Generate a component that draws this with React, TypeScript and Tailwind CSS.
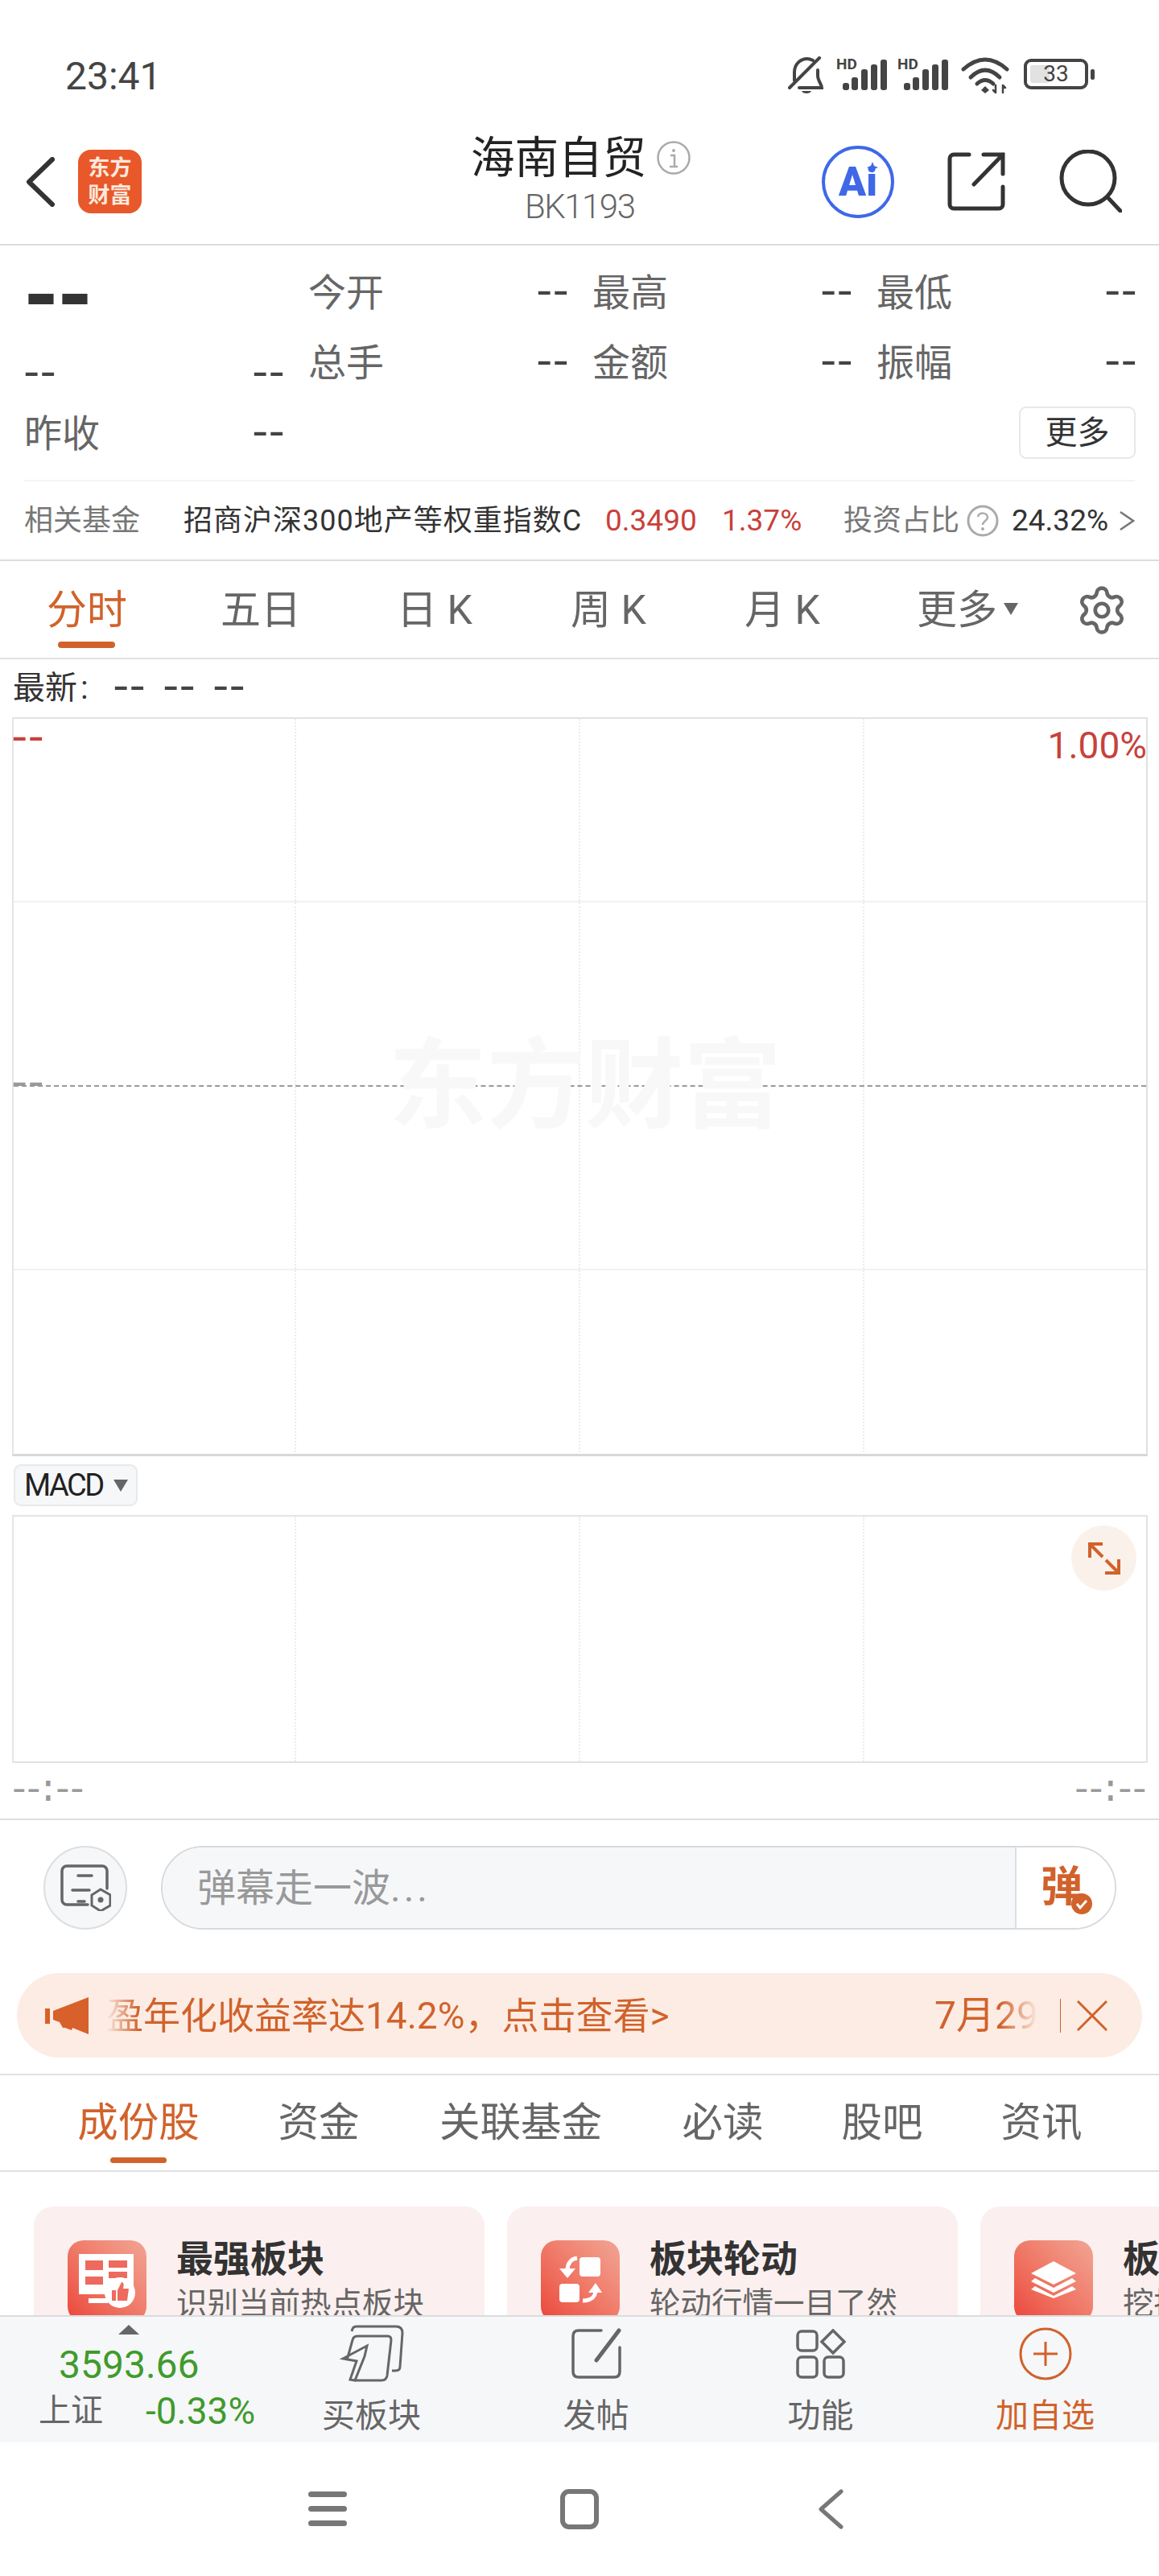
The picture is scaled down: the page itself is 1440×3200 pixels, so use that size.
import { Settings } from "lucide-react";

const MONO = "font-['Liberation_Mono',monospace]";

// wide, tight dashes: the mono hyphen is pulled together with negative tracking
const Dash = ({ className = "text-[#444]" }: { className?: string }) => (
  <span className={`${MONO} inline-block w-[38px] whitespace-nowrap indent-[-7px] text-[54px] leading-none tracking-[-12px] ${className}`}>--</span>
);

const Stat = ({ label }: { label: string }) => (
  <div className="flex h-[87px] items-center justify-between">
    <span className="text-[47px] leading-none text-[#666]">{label}</span>
    <Dash />
  </div>
);

const Signal = () => (
  <div className="relative h-[40px] w-[64px]">
    <span className="absolute left-0 top-0 text-[19px] font-bold leading-[16px] text-[#444]">HD</span>
    <svg viewBox="0 0 64 40" className="h-[40px] w-[64px]" fill="#444">
      <rect x="8" y="31" width="8" height="9" rx="3" />
      <rect x="19" y="24" width="8" height="16" rx="3" />
      <rect x="31" y="14" width="8" height="26" rx="3" />
      <rect x="43" y="8" width="8" height="32" rx="3" />
      <rect x="55" y="2" width="8" height="38" rx="3" />
    </svg>
  </div>
);

const StatusBar = () => (
  <div className="flex h-[150px] items-start justify-between pl-[81px] pr-[80px] pt-[70px] text-[#444]">
    <span className="text-[48px] leading-[50px]">23:41</span>
    <div className="flex items-start">
      <svg viewBox="0 0 46 46" className="h-[46px] w-[46px]" fill="none" stroke="#444" strokeWidth="4" strokeLinecap="round">
        <path d="M2 39 39 2" />
        <path d="M8 30V20C8 9 16 3 24 3c3 0 5 1 7 2" />
        <path d="M37 17v7c0 6 5 11 5 15H14" />
        <path d="M17 43h12c-1 4-11 4-12 0Z" fill="#444" stroke="none" />
      </svg>
      <div className="ml-[14px] mt-[2px] flex gap-[12px]">
        <Signal />
        <Signal />
      </div>
      <svg viewBox="0 0 60 46" className="ml-[15px] mt-[1px] h-[46px] w-[60px]" fill="none" stroke="#444" strokeWidth="5" strokeLinecap="round">
        <path d="M3 15Q30-9 57 15" />
        <path d="M12 25Q30 7 48 25" />
        <path d="M20 33Q30 24 40 33" />
        <path d="M30 36l5 5-5 4-5-4Z" fill="#444" stroke="none" />
        <path d="M43 35v9M40 41l3 3M52 44v-9M52 35l3 3" strokeWidth="2.5" />
      </svg>
      <div className="ml-[18px] mt-[3px] flex items-center">
        <div className="relative flex h-[38px] w-[80px] items-center justify-center rounded-[9px] border-[4px] border-[#444]">
          <div className="absolute bottom-[4px] left-[4px] top-[4px] w-[24px] rounded-[3px] bg-[#e2e2e2]" />
          <span className="relative text-[28px] leading-none text-[#444]">33</span>
        </div>
        <div className="ml-[3px] h-[13px] w-[5px] rounded-[2px] bg-[#444]" />
      </div>
    </div>
  </div>
);

const NavBar = () => (
  <div className="flex h-[155px] items-start border-b-2 border-[#dcdcdc] pl-[32px]">
    <svg viewBox="0 0 36 62" className="mt-[45px] h-[62px] w-[36px]" fill="none" stroke="#333" strokeWidth="6" strokeLinecap="round" strokeLinejoin="round">
      <path d="M33 3 4 31l29 28" />
    </svg>
    <div className="ml-[29px] mt-[36px] flex h-[79px] w-[79px] flex-col items-center justify-center rounded-[16px] bg-[#e8582a] text-[27px] font-bold leading-[34px] text-[#fde8dc]">
      <span>东方</span>
      <span>财富</span>
    </div>
    <div className="ml-[409px] mt-[16px] flex w-[280px] shrink-0 flex-col items-start">
      <div className="flex items-center">
        <span className="whitespace-nowrap text-[54.5px] leading-[60px] text-[#222]">海南自贸</span>
        <svg viewBox="0 0 42 42" className="ml-[13px] h-[42px] w-[42px]" fill="none" stroke="#aaa" strokeWidth="2.5">
          <circle cx="21" cy="21" r="19.5" />
          <circle cx="21" cy="12" r="2" fill="#aaa" stroke="none" />
          <path d="M17 18h5v14M16 32h10" />
        </svg>
      </div>
      <span className="ml-[67px] mt-[6px] text-[42px] font-light leading-[50px] tracking-[-1.5px] text-[#666]">BK1193</span>
    </div>
    <div className="ml-[-10px] flex">
      <div className="relative ml-[166px] mt-[31px] flex h-[90px] w-[90px] items-center justify-center rounded-full border-[4px] border-[#3f68e8]">
        <span className="text-[50px] font-black leading-none text-[#3f68e8]">Ai</span>
        <svg viewBox="0 0 14 14" className="absolute right-[16px] top-[16px] h-[14px] w-[14px]" fill="#3f68e8">
          <path d="M7 0 9 5l5 2-5 2-2 5-2-5-5-2 5-2Z" />
        </svg>
      </div>
      <svg viewBox="0 0 72 73" className="ml-[66px] mt-[39px] h-[73px] w-[72px]" fill="none" stroke="#333" strokeWidth="5" strokeLinecap="round">
        <path d="M27 3H8a5 5 0 0 0-5 5v57a5 5 0 0 0 5 5h56a5 5 0 0 0 5-5V43" />
        <path d="M45 3h24v24M33 40 69 3" />
      </svg>
      <svg viewBox="0 0 78 78" className="ml-[67px] mt-[36px] h-[78px] w-[78px]" fill="none" stroke="#333" strokeWidth="5" strokeLinecap="round">
        <circle cx="36" cy="35" r="33" />
        <path d="M60 59 76 76" />
      </svg>
    </div>
  </div>
);

const Quote = () => (
  <div className="border-b-2 border-[#dcdcdc]">
    <div className="mx-[30px] grid grid-cols-[322px_322px_322px_322px] gap-x-[31px] border-b-2 border-[#f4f4f4] pb-[15px] pt-[15px]">
      <div className="flex h-[87px] items-center overflow-visible">
        <span className={`${MONO} mt-[14px] block w-[84px] whitespace-nowrap indent-[-12px] text-[110px] font-bold leading-[87px] tracking-[-24px] text-[#333]`}>--</span>
      </div>
      <Stat label="今开" />
      <Stat label="最高" />
      <Stat label="最低" />
      <div className="flex h-[87px] items-center justify-between pt-[28px]">
        <Dash />
        <Dash />
      </div>
      <Stat label="总手" />
      <Stat label="金额" />
      <Stat label="振幅" />
      <div className="flex h-[87px] items-center justify-between pt-[2px]">
        <span className="text-[47px] leading-none text-[#666]">昨收</span>
        <Dash />
      </div>
      <div />
      <div />
      <div className="flex h-[87px] items-center justify-end">
        <div className="flex h-[65px] w-[145px] items-center justify-center rounded-[9px] border-2 border-[#e8e8e8] text-[40px] leading-none text-[#333]">更多</div>
      </div>
    </div>
    <div className="flex h-[97px] items-center whitespace-nowrap pl-[30px] text-[36px] leading-none">
      <span className="w-[198px] shrink-0 text-[#777]">相关基金</span>
      <span className="w-[524px] shrink-0 tracking-[1px] text-[#333]">招商沪深300地产等权重指数C</span>
      <span className="w-[145px] shrink-0 text-[37px] text-[#c8413a]">0.3490</span>
      <span className="w-[151px] shrink-0 text-[37px] text-[#c8413a]">1.37%</span>
      <span className="shrink-0 text-[#777]">投资占比</span>
      <svg viewBox="0 0 40 40" className="ml-[9px] h-[40px] w-[40px] shrink-0" fill="none" stroke="#aaa" strokeWidth="3">
        <circle cx="20" cy="20" r="18" />
        <path d="M14 15c1-6 12-6 12 1 0 4-6 4-6 9" strokeWidth="2.5" />
        <circle cx="20" cy="30" r="2" fill="#aaa" stroke="none" />
      </svg>
      <span className="ml-[16px] shrink-0 text-[37px] text-[#333]">24.32%</span>
      <svg viewBox="0 0 20 26" className="ml-[13px] h-[26px] w-[20px] shrink-0" fill="none" stroke="#777" strokeWidth="2.5">
        <path d="M2 2 18 13 2 24" />
      </svg>
    </div>
  </div>
);

const periodTabs = ["分时", "五日", "日 K", "周 K", "月 K"];

const PeriodTabs = () => (
  <div className="flex h-[122px] items-center border-b-2 border-[#e2e2e2] pt-[2px] text-[50px] leading-none text-[#666]">
    {periodTabs.map((t, i) => (
      <div key={t} className="relative flex h-full w-[216px] shrink-0 items-center justify-center">
        <span className={i === 0 ? "text-[#d1622b]" : ""}>{t}</span>
        {i === 0 && <div className="absolute bottom-[12px] left-[72px] h-[8px] w-[71px] rounded-full bg-[#d1622b]" />}
      </div>
    ))}
    <div className="flex w-[200px] shrink-0 items-center pl-[59px]">
      <span>更多</span>
      <svg viewBox="0 0 18 15" className="ml-[8px] mt-[-4px] h-[15px] w-[18px]" fill="#666">
        <path d="M0 0h18L9 15Z" />
      </svg>
    </div>
    <Settings className="ml-[56px] h-[66px] w-[66px] shrink-0 text-[#666]" strokeWidth={1.7} />
  </div>
);

const LatestRow = () => (
  <div className="flex h-[72px] items-center pl-[16px]">
    <span className="flex w-[125px] text-[40px] leading-none text-[#333]">
      最新<span className="ml-[4px]">:</span>
    </span>
    <div className="flex gap-[24px]">
      <Dash />
      <Dash />
      <Dash />
    </div>
  </div>
);

const PriceChart = () => {
  const rows = ["border-[#f1f1f1]", "border-dashed border-[#999]", "border-[#f1f1f1]", "border-transparent"];
  return (
    <div className="relative mx-[15px] flex h-[918px] w-[1411px] flex-col border-x-2 border-b-[3px] border-t-2 border-b-[#d8d8d8] border-l-[#e4e4e4] border-r-[#e0e0e0] border-t-[#e2e2e2]">
      {rows.map((r, i) => (
        <div key={i} className={`flex flex-1 border-b-2 ${r}`}>
          <div className="w-[351px] border-r-2 border-dotted border-r-[#ececec]" />
          <div className="w-[353px] border-r-2 border-dotted border-r-[#ececec]" />
          <div className="w-[353px] border-r-2 border-dotted border-r-[#ececec]" />
        </div>
      ))}
      <span className="absolute left-[-2px] top-[-2px]">
        <Dash className="text-[#c8413a]" />
      </span>
      <span className="absolute right-[-1px] top-[10px] text-[46px] leading-none text-[#c8413a]">1.00%</span>
      <span className="absolute left-[-2px] top-[427px]">
        <Dash className="text-[#999]" />
      </span>
      <span className="absolute left-[466px] top-[396px] text-[122px] font-bold leading-none text-[#f8f8f8]">东方财富</span>
    </div>
  );
};

const MacdChart = () => (
  <div className="relative mx-[15px] flex h-[308px] w-[1411px] border-x-2 border-y-2 border-b-[#e2e2e2] border-l-[#e6e6e6] border-r-[#e2e2e2] border-t-[#e4e4e4]">
    <div className="w-[351px] border-r-2 border-dotted border-r-[#ececec]" />
    <div className="w-[353px] border-r-2 border-dotted border-r-[#ececec]" />
    <div className="w-[353px] border-r-2 border-dotted border-r-[#ececec]" />
    <div className="absolute right-[12px] top-[11px] flex h-[81px] w-[81px] items-center justify-center rounded-full bg-[#faf1ea]">
      <svg viewBox="0 0 40 40" className="h-[40px] w-[40px]" fill="none" stroke="#d1622b" strokeWidth="4">
        <path d="M18 2H2v17M2 2l16 16M22 22l16 16M38 21v17H21" />
      </svg>
    </div>
  </div>
);

const Danmu = () => (
  <div className="flex h-[192px] items-start border-t-2 border-[#dedede] pl-[54px] pt-[32px]">
    <div className="flex h-[104px] w-[104px] items-center justify-center rounded-full border-2 border-[#dcdee1] bg-[#f6f7f9]">
      <svg viewBox="0 0 63 58" className="h-[58px] w-[63px]" fill="none" stroke="#666" strokeWidth="3.5" strokeLinecap="round">
        <path d="M58 30V8a6 6 0 0 0-6-6H8a6 6 0 0 0-6 6v36a6 6 0 0 0 6 6h26" />
        <path d="M22 14h17M15 32h21M22 46h8" />
        <path d="M50 31 62 38v13l-12 7-11-7V38Z" strokeWidth="3" />
        <circle cx="50" cy="44" r="3.5" fill="#666" stroke="none" />
      </svg>
    </div>
    <div className="ml-[42px] flex h-[104px] w-[1187px] overflow-hidden rounded-full border-2 border-[#d8dadd]">
      <div className="flex flex-1 items-center bg-[#f6f7f9] pl-[43px] pt-[2px] text-[48px] leading-none text-[#999]">
        弹幕走一波<span className="tracking-[4px]">...</span>
      </div>
      <div className="relative flex w-[124px] items-center border-l-2 border-[#dcdee1] bg-white pl-[30px]">
        <span className="text-[52px] font-bold leading-none text-[#d1622b]">弹</span>
        <svg viewBox="0 0 26 26" className="absolute left-[68px] top-[57px] h-[26px] w-[26px]">
          <circle cx="13" cy="13" r="13" fill="#d1622b" />
          <path d="M7 13l4 5 8-9" fill="none" stroke="#fff" strokeWidth="3" />
        </svg>
      </div>
    </div>
  </div>
);

const Banner = () => (
  <div className="mx-[21px] flex h-[105px] w-[1398px] items-center rounded-full bg-[#fcece4] pl-[35px] text-[46px] leading-none text-[#d1622b]">
    <svg viewBox="0 0 54 46" className="h-[46px] w-[54px]" fill="#d8602a">
      <rect x="0" y="14" width="6" height="19" />
      <path d="M10 17 54 0v46l-20-8-1 3-8-3-3 0-4-7-8-3Z" />
    </svg>
    <div className="ml-[22px] flex w-[1158px] items-center justify-between whitespace-nowrap [mask-image:linear-gradient(90deg,transparent,#000_40px,#000_1110px,transparent)]">
      <span>盈年化收益率达14.2%，点击查看&gt;</span>
      <span className="text-[48px]">7月29</span>
    </div>
    <div className="ml-[27px] h-[42px] w-px bg-[#d1622b]" />
    <svg viewBox="0 0 38 38" className="ml-[20px] h-[38px] w-[38px]" fill="none" stroke="#d1622b" strokeWidth="3">
      <path d="M1 1l36 36M37 1 1 37" />
    </svg>
  </div>
);

const infoTabs = [
  { name: "成份股", w: "w-[152px]" },
  { name: "资金", w: "w-[100px]" },
  { name: "关联基金", w: "w-[206px]" },
  { name: "必读", w: "w-[100px]" },
  { name: "股吧", w: "w-[100px]" },
  { name: "资讯", w: "w-[100px]" },
];

const InfoTabs = () => (
  <div className="mt-[20px] flex h-[122px] items-center gap-x-[98px] border-y-2 border-[#e0e0e0] pl-[96px] text-[50.5px] leading-none text-[#666]">
    {infoTabs.map((t, i) => (
      <div key={t.name} className={`relative flex h-full shrink-0 items-center justify-center whitespace-nowrap ${t.w} ${i === 0 ? "text-[#d1622b]" : ""}`}>
        {t.name}
        {i === 0 && <div className="absolute bottom-[9px] left-[41px] h-[7px] w-[70px] rounded-full bg-[#d1622b]" />}
      </div>
    ))}
  </div>
);

const BoardIcon = () => (
  <svg viewBox="0 0 98 98" className="h-[98px] w-[98px]">
    <path d="M14 17h68v50H14Z" fill="#fff" />
    <path d="M22 25h22v12H22ZM51 25h23v9H51ZM51 39h23v8H51ZM22 45h22v10H22Z" fill="#ee6a5e" />
    <path d="M26 72h24v6H26Z" fill="#fff" />
    <circle cx="65" cy="65" r="19" fill="#fff" />
    <path d="M55 62h5v13h-5ZM62 62l5-10c3 0 3 3 2 8h7l-2 15H62Z" fill="#ee6a5e" />
  </svg>
);

const RotateIcon = () => (
  <svg viewBox="0 0 98 98" className="h-[98px] w-[98px]" fill="#fff">
    <rect x="23" y="54" width="25" height="23" rx="4" />
    <rect x="48" y="21" width="26" height="24" rx="4" />
    <path d="M45 22C38 23 33 28 33 37" fill="none" stroke="#fff" strokeWidth="5" />
    <path d="M23 35h20L33 47Z" />
    <path d="M52 75C62 75 68 70 68 62" fill="none" stroke="#fff" strokeWidth="5" />
    <path d="M59 65 68 53l8 12Z" />
  </svg>
);

const LayersIcon = () => (
  <svg viewBox="0 0 98 98" className="h-[98px] w-[98px]" fill="#fff">
    <path d="M49 26 77 41 49 55 21 41Z" />
    <path d="M26 47 49 59 72 47 77 51 49 65 21 51Z" />
    <path d="M26 57 49 69 72 57 77 61 49 72 21 61Z" />
  </svg>
);

const cards = [
  { title: "最强板块", sub: "识别当前热点板块", Icon: BoardIcon },
  { title: "板块轮动", sub: "轮动行情一目了然", Icon: RotateIcon },
  { title: "板块挖掘", sub: "挖掘潜力板块", Icon: LayersIcon },
];

const Cards = () => (
  <div className="flex h-[178px] gap-x-[28px] overflow-hidden pl-[42px] pt-[43px]">
    {cards.map(({ title, sub, Icon }) => (
      <div key={title} className="flex h-[180px] w-[560px] shrink-0 rounded-[24px] bg-[#fbf0ef] pl-[42px] pt-[42px]">
        <div className="h-[102px] w-[98px] shrink-0 rounded-[20px] bg-linear-to-tr from-[#ea4339] to-[#f1a594]">
          <Icon />
        </div>
        <div className="ml-[37px] flex flex-col">
          <span className="whitespace-nowrap text-[46px] font-bold leading-[46px] text-[#333]">{title}</span>
          <span className="mt-[13px] whitespace-nowrap text-[38.5px] leading-[40px] text-[#666]">{sub}</span>
        </div>
      </div>
    ))}
  </div>
);

const actions = [
  {
    label: "买板块",
    icon: (
      <svg viewBox="0 0 80 72" className="h-[72px] w-[80px]" fill="none" stroke="#666" strokeWidth="3">
        <path d="M15 8l1-3q1-3 5-3h49q8 0 8 8l-3 42q0 5-6 5h-4" />
        <path d="M9 44l7-25q1-5 6-5h38q4 0 4 5l-5 44q-1 6-7 6H19" />
        <path d="M4 42l30-16-3 13-12 30-6-1 8-23-17-3Z" />
      </svg>
    ),
  },
  {
    label: "发帖",
    icon: (
      <svg viewBox="0 0 64 64" className="h-[64px] w-[64px]" fill="none" stroke="#666" strokeWidth="3.5" strokeLinecap="round">
        <path d="M38 3H10Q3 3 3 10v44q0 7 7 7h44q7 0 7-7V24" />
        <path d="M32 40 60 3" strokeWidth="5" />
      </svg>
    ),
  },
  {
    label: "功能",
    icon: (
      <svg viewBox="0 0 62 62" className="h-[62px] w-[62px]" fill="none" stroke="#666" strokeWidth="3.5">
        <rect x="2" y="3" width="24" height="24" rx="5" />
        <path d="M46 2 60 16 46 30 32 16Z" />
        <rect x="2" y="35" width="24" height="25" rx="5" />
        <rect x="35" y="35" width="24" height="25" rx="5" />
      </svg>
    ),
  },
  {
    label: "加自选",
    active: true,
    icon: (
      <svg viewBox="0 0 66 66" className="h-[66px] w-[66px]" fill="none" stroke="#d1622b" strokeWidth="3">
        <circle cx="33" cy="33" r="31" />
        <path d="M33 18v30M18 33h30" />
      </svg>
    ),
  },
];

const BottomBar = () => (
  <div className="flex h-[158px] border-t-2 border-[#dcdcdc] bg-[#f6f7f9]">
    <div className="w-[322px] shrink-0 pt-[10px]">
      <svg viewBox="0 0 26 12" className="ml-[147px] h-[12px] w-[26px]" fill="#666">
        <path d="M13 0 26 12H0Z" />
      </svg>
      <div className="mt-[14px] pl-[73px] text-[48px] leading-[48px] text-[#3f9b2c]">3593.66</div>
      <div className="mt-[10px] flex items-center pl-[48px]">
        <span className="text-[40px] leading-none text-[#666]">上证</span>
        <span className="ml-[53px] text-[46px] leading-none text-[#3f9b2c]">-0.33%</span>
      </div>
    </div>
    {actions.map((a) => (
      <div key={a.label} className="flex w-[279px] flex-col items-center">
        <div className="flex h-[86px] items-center pt-[6px]">{a.icon}</div>
        <span className={`mt-[17px] text-[41px] leading-none ${a.active ? "text-[#d1622b]" : "text-[#666]"}`}>{a.label}</span>
      </div>
    ))}
  </div>
);

const SystemNav = () => (
  <div className="flex h-[166px] items-start bg-white pl-[383px] pt-[58px]">
    <div className="flex h-[46px] w-[48px] flex-col justify-between pt-[3px]">
      <div className="h-[7px] rounded-full bg-[#777]" />
      <div className="h-[7px] rounded-full bg-[#777]" />
      <div className="h-[7px] rounded-full bg-[#777]" />
    </div>
    <div className="ml-[265px] h-[50px] w-[48px] rounded-[11px] border-[6px] border-[#777]" />
    <svg viewBox="0 0 32 50" className="ml-[272px] h-[50px] w-[32px]" fill="none" stroke="#777" strokeWidth="5" strokeLinecap="round" strokeLinejoin="round">
      <path d="M29 3 4 25l25 22" />
    </svg>
  </div>
);

export default function App() {
  return (
    <div className="h-[3200px] w-[1440px] overflow-hidden bg-white font-['Roboto','Noto_Sans_CJK_SC',sans-serif]">
      <StatusBar />
      <NavBar />
      <Quote />
      <PeriodTabs />
      <LatestRow />
      <PriceChart />
      <div className="flex h-[73px] pl-[17px] pt-[10px]">
        <div className="flex h-[52px] w-[154px] items-center rounded-[9px] border-2 border-[#e8e9ec] bg-[#f6f7f9] pl-[11px]">
          <span className="text-[38px] leading-none tracking-[-2.5px] text-[#222]">MACD</span>
          <svg viewBox="0 0 18 15" className="ml-[13px] h-[15px] w-[18px]" fill="#666">
            <path d="M0 0h18L9 15Z" />
          </svg>
        </div>
      </div>
      <MacdChart />
      <div className={`${MONO} flex h-[69px] items-center justify-between pl-[10px] pr-[20px] text-[46px] leading-none tracking-[-9.6px] text-[#999]`}>
        <span>--:--</span>
        <span>--:--</span>
      </div>
      <Danmu />
      <Banner />
      <InfoTabs />
      <Cards />
      <BottomBar />
      <SystemNav />
    </div>
  );
}
